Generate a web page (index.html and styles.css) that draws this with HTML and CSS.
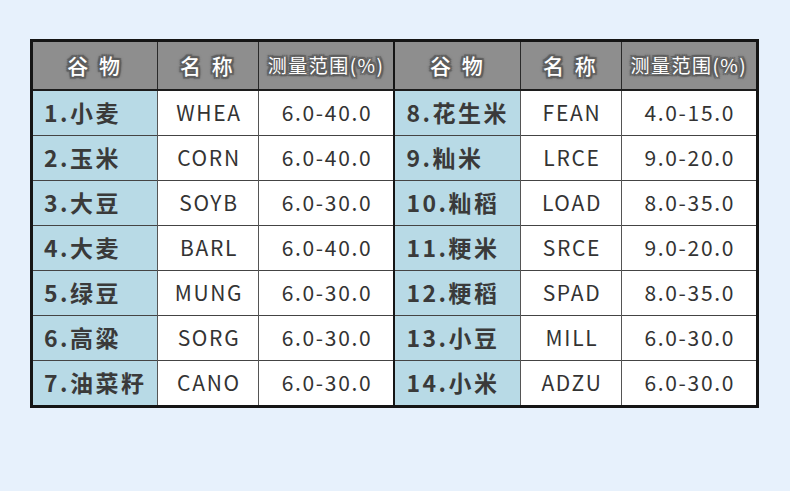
FILE: index.html
```html
<!DOCTYPE html>
<html>
	<head>
		<meta charset="UTF-8">
		<title>谷物测量范围</title>
		<link rel="stylesheet" href="styles.css">
	</head>
	<body>
		<div id="mainContainer">
			<table class="grainTable">
				<colgroup>
					<col class="c-name"><col class="c-code"><col class="c-range">
					<col class="c-name"><col class="c-code"><col class="c-range">
				</colgroup>
				<thead>
					<tr>
						<th>谷 物</th><th>名 称</th><th class="small">测量范围(%)</th>
						<th class="split">谷 物</th><th>名 称</th><th class="small">测量范围(%)</th>
					</tr>
				</thead>
				<tbody>
					<tr>
						<td class="grain">1.小麦</td><td>WHEA</td><td>6.0-40.0</td>
						<td class="grain split">8.花生米</td><td>FEAN</td><td>4.0-15.0</td>
					</tr>
					<tr>
						<td class="grain">2.玉米</td><td>CORN</td><td>6.0-40.0</td>
						<td class="grain split">9.籼米</td><td>LRCE</td><td>9.0-20.0</td>
					</tr>
					<tr>
						<td class="grain">3.大豆</td><td>SOYB</td><td>6.0-30.0</td>
						<td class="grain split">10.籼稻</td><td>LOAD</td><td>8.0-35.0</td>
					</tr>
					<tr>
						<td class="grain">4.大麦</td><td>BARL</td><td>6.0-40.0</td>
						<td class="grain split">11.粳米</td><td>SRCE</td><td>9.0-20.0</td>
					</tr>
					<tr>
						<td class="grain">5.绿豆</td><td>MUNG</td><td>6.0-30.0</td>
						<td class="grain split">12.粳稻</td><td>SPAD</td><td>8.0-35.0</td>
					</tr>
					<tr>
						<td class="grain">6.高粱</td><td>SORG</td><td>6.0-30.0</td>
						<td class="grain split">13.小豆</td><td>MILL</td><td>6.0-30.0</td>
					</tr>
					<tr>
						<td class="grain">7.油菜籽</td><td>CANO</td><td>6.0-30.0</td>
						<td class="grain split">14.小米</td><td>ADZU</td><td>6.0-30.0</td>
					</tr>
				</tbody>
			</table>
		</div>
	</body>
</html>
```

FILE: styles.css
```css
body {
	margin: 0;
	background-color: #e7f1fc;
	font-family: "Noto Sans CJK SC", "Noto Sans", sans-serif;
	color: #333333;
}
#mainContainer {
	padding-top: 39px;
	padding-left: 30px;
	height: 452px;
}
.grainTable {
	border-collapse: collapse;
	table-layout: fixed;
	width: 729px;
	border: 3px solid #151515;
}
.c-name { width: 126px; }
.c-code { width: 100px; }
.c-range { width: 136px; }
.grainTable th {
	height: 45px;
	padding: 0 0 2px 0;
	background-color: #8e8e8e;
	color: #ffffff;
	font-size: 21px;
	font-weight: 500;
	letter-spacing: 3px;
	border-left: 1px solid #2a2a2a;
	border-bottom: 2px solid #1c1c1c;
	text-shadow: 2px 0 1px #5e5e5e, -2px 0 1px #5e5e5e, 0 2px 1px #5e5e5e, 0 -2px 1px #5e5e5e,
		2px 2px 1px #5e5e5e, -2px -2px 1px #5e5e5e, 2px -2px 1px #5e5e5e, -2px 2px 1px #5e5e5e,
		0 0 4px #666666;
}
.grainTable th.small {
	font-size: 19px;
	font-weight: normal;
	letter-spacing: 1.5px;
}
.grainTable td {
	height: 41px;
	padding: 0 0 3px 2px;
	text-align: center;
	font-size: 21px;
	letter-spacing: 1.7px;
	background-color: #ffffff;
	border-left: 1px solid #555555;
	border-top: 1px solid #444444;
}
.grainTable td.grain {
	padding-left: 11px;
	text-align: left;
	background-color: #b8dae6;
	font-weight: bold;
	font-size: 23px;
	letter-spacing: 2.5px;
	color: #3a3a3a;
}
.grainTable .split {
	border-left: 2px solid #151515;
}
```
